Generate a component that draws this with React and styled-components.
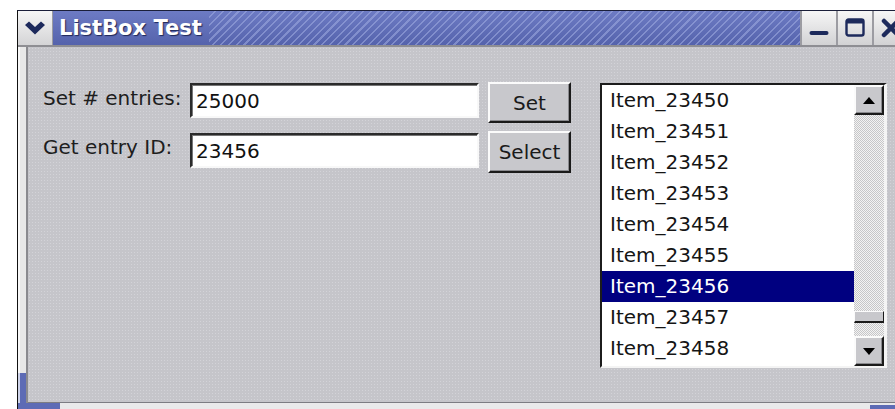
import styled, { createGlobalStyle } from "styled-components"

const GlobalStyle = createGlobalStyle`
    html, body {
        margin: 0;
        background: #ffffff;
        overflow: hidden;
    }
`

const Window = styled.div`
    margin: 10px 0 0 17px;
    width: 890px;
    border-left: 1px solid #111;
    border-top: 1px solid #1b1f3a;
    display: flex;
    flex-direction: column;
`

const TitleBar = styled.div`
    height: 34px;
    display: flex;
    align-items: stretch;
    background: linear-gradient(to bottom, #6d7bc4, #5563ac);
    border-bottom: 2px solid #8e8e93;
`

const MenuButton = styled.div`
    width: 34px;
    display: flex;
    align-items: center;
    justify-content: center;
    background: linear-gradient(to bottom, #f6f6f6, #d4d4d6);
    border-right: 1px solid #9a9aa0;
`

const Title = styled.div`
    padding: 0 7px 0 6px;
    display: flex;
    align-items: center;
    font-family: "DejaVu Sans", sans-serif;
    font-weight: bold;
    font-size: 21px;
    color: #ffffff;
    text-shadow: 1px 1px 1px #1e2656;
    white-space: nowrap;
`

const Hatch = styled.div`
    flex: 1;
    background: repeating-linear-gradient(
        135deg,
        transparent 0,
        transparent 4px,
        rgba(160, 172, 225, 0.55) 4px,
        rgba(160, 172, 225, 0.55) 5.5px
    );
`

const WinButton = styled.div`
    width: 34px;
    display: flex;
    align-items: center;
    justify-content: center;
    background: linear-gradient(to bottom, #f6f6f6, #d2d2d4);
    border-left: 2px solid #9c9ca2;
`

const Middle = styled.div`
    height: 356px;
    display: flex;
`

const LeftEdge = styled.div`
    width: 8px;
    border-right: 2px solid #8a8a8f;
    background: linear-gradient(
        to bottom,
        #e8e8e8 0,
        #e8e8e8 calc(100% - 30px),
        #5d6bb5 calc(100% - 30px)
    );
    box-shadow: inset 2px 0 0 rgba(255, 255, 255, 0.7);
`

const Content = styled.div`
    flex: 1;
    display: flex;
    align-items: flex-start;
    padding: 35px 0 0 15px;
    border-bottom: 1px solid #7c7c82;
    background-color: #c5c5ca;
    background-image: radial-gradient(rgba(220, 220, 226, 0.6) 0.6px, transparent 0.9px);
    background-size: 3px 3px;
`

const BottomEdge = styled.div`
    height: 6px;
    display: flex;
    background: #e9e9ea;
`

const EdgeCorner = styled.div`
    width: ${p => p.$width}px;
    margin-top: ${p => p.$drop || 0}px;
    background: #5d6bb5;
`

const Form = styled.div`
    display: grid;
    grid-template-columns: 138px 289px 83px;
    grid-template-rows: 41px 42px;
    column-gap: 9px;
    row-gap: 8px;
`

const Label = styled.div`
    margin-top: -1px;
    line-height: 35px;
    font-family: "DejaVu Sans", sans-serif;
    font-size: 20px;
    color: #1e1e1e;
    white-space: nowrap;
`

const Field = styled.input`
    box-sizing: border-box;
    align-self: start;
    margin: ${p => p.$offset || 1}px 0 0;
    width: 289px;
    height: 35px;
    padding: 0 0 0 4px;
    border: 2px solid;
    border-color: #2b2b2b #f8f8f8 #f8f8f8 #2b2b2b;
    box-shadow: inset 1px 1px 0 #777;
    background: #ffffff;
    font-family: "DejaVu Sans", sans-serif;
    font-size: 20px;
    color: #111;
    outline: none;
`

const Button = styled.button`
    box-sizing: border-box;
    width: 83px;
    height: 100%;
    padding: 0;
    border: 2px solid;
    border-color: #fbfbfb #1a1a1a #1a1a1a #fbfbfb;
    box-shadow: inset -1px -1px 0 #8a8a8e;
    background: #c8c8cc;
    font-family: "DejaVu Sans", sans-serif;
    font-size: 20px;
    color: #1a1a1a;
`

const ListBox = styled.div`
    box-sizing: border-box;
    margin: 1px 0 0 29px;
    width: 287px;
    height: 285px;
    display: flex;
    border-style: solid;
    border-width: 2px 3px 2px 2px;
    border-color: #1c1c1c #f4f4f4 #f4f4f4 #1c1c1c;
    background: #ffffff;
`

const Rows = styled.div`
    flex: 1;
    display: flex;
    flex-direction: column;
`

const Row = styled.div`
    height: 31px;
    line-height: 31px;
    padding-left: 8px;
    font-family: "DejaVu Sans", sans-serif;
    font-size: 20px;
    color: ${p => (p.$selected ? "#ffffff" : "#151515")};
    background: ${p => (p.$selected ? "#000080" : "transparent")};
`

const ScrollBar = styled.div`
    width: 30px;
    display: flex;
    flex-direction: column;
`

const Track = styled.div`
    flex: 1;
    display: flex;
    flex-direction: column;
    background: repeating-conic-gradient(#c6c6c8 0 25%, #f3f3f3 0 50%) 0 0 / 2px 2px;
`

const ArrowButton = styled.div`
    box-sizing: border-box;
    height: 30px;
    display: flex;
    align-items: center;
    justify-content: center;
    border: 2px solid;
    border-color: #fbfbfb #1a1a1a #1a1a1a #fbfbfb;
    box-shadow: inset -1px -1px 0 #8a8a8e;
    background: #c8c8cc;
`

const Thumb = styled.div`
    box-sizing: border-box;
    height: 12px;
    border: 1px solid;
    border-color: #fbfbfb #1a1a1a #1a1a1a #fbfbfb;
    border-bottom-width: 2px;
    background: #c8c8cc;
`

const TOTAL = 25000
const FIRST = 23450
const VISIBLE = 9
const SELECTED = 23456
const TRACK = 221
const THUMB = 12

const items = Array.from({ length: VISIBLE }, (_, i) => FIRST + i)
const thumbTop = Math.round(((TRACK - THUMB) * FIRST) / (TOTAL - VISIBLE))

export default function App() {
    return (
        <>
            <GlobalStyle />
            <Window>
                <TitleBar>
                    <MenuButton>
                        <svg width="22" height="14" viewBox="0 0 22 14">
                            <path d="M1 4 L5 0.5 L11 6 L17 0.5 L21 4 L11 13.5 Z" fill="#1d2a5c" />
                        </svg>
                    </MenuButton>
                    <Title>ListBox Test</Title>
                    <Hatch />
                    <WinButton>
                        <svg width="20" height="34" viewBox="0 0 20 34">
                            <rect x="0.5" y="20" width="19" height="4" rx="2" fill="#1d2a5c" />
                        </svg>
                    </WinButton>
                    <WinButton>
                        <svg width="20" height="20" viewBox="0 0 20 20">
                            <rect x="1.5" y="1.5" width="17" height="16" rx="2" fill="none" stroke="#1d2a5c" strokeWidth="2.4" />
                            <rect x="1.5" y="1.5" width="17" height="4" fill="#1d2a5c" />
                        </svg>
                    </WinButton>
                    <WinButton>
                        <svg width="20" height="20" viewBox="0 0 20 20">
                            <path d="M3 3 L17 17 M17 3 L3 17" stroke="#1d2a5c" strokeWidth="4.5" strokeLinecap="round" />
                        </svg>
                    </WinButton>
                </TitleBar>
                <Middle>
                    <LeftEdge />
                    <Content>
                        <Form>
                            <Label>Set # entries:</Label>
                            <Field defaultValue="25000" />
                            <Button>Set</Button>
                            <Label>Get entry ID:</Label>
                            <Field defaultValue="23456" $offset={2} />
                            <Button>Select</Button>
                        </Form>
                        <ListBox>
                            <Rows>
                                {items.map(n => (
                                    <Row key={n} $selected={n === SELECTED}>
                                        Item_{n}
                                    </Row>
                                ))}
                            </Rows>
                            <ScrollBar>
                                <ArrowButton>
                                    <svg width="12" height="7" viewBox="0 0 12 7">
                                        <path d="M0 7 L6 0 L12 7 Z" fill="#000" />
                                    </svg>
                                </ArrowButton>
                                <Track>
                                    <Thumb style={{ marginTop: thumbTop }} />
                                </Track>
                                <ArrowButton>
                                    <svg width="12" height="7" viewBox="0 0 12 7">
                                        <path d="M0 0 L12 0 L6 7 Z" fill="#000" />
                                    </svg>
                                </ArrowButton>
                            </ScrollBar>
                        </ListBox>
                    </Content>
                </Middle>
                <BottomEdge>
                    <EdgeCorner $width={42} />
                    <div style={{ flex: 1 }} />
                    <EdgeCorner $width={38} $drop={2} />
                </BottomEdge>
            </Window>
        </>
    )
}
